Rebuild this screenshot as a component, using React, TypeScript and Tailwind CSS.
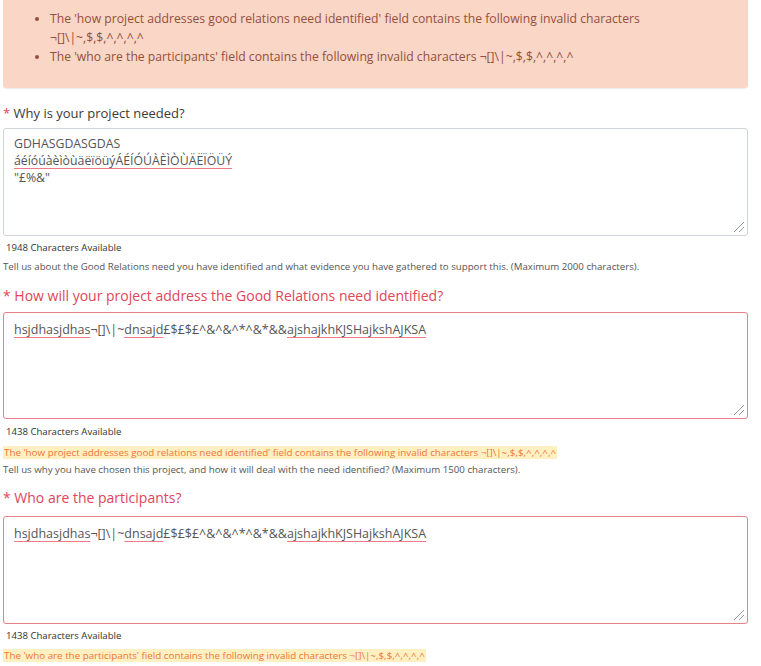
import React from "react";

const font = { fontFamily: '"Open Sans", "Noto Sans", Arial, sans-serif' };

function Resize() {
  return (
    <svg className="absolute right-[2px] bottom-[2px]" width="12" height="12" viewBox="0 0 12 12">
      <line x1="1" y1="11" x2="11" y2="1" stroke="#9a9a9a" strokeWidth="1" />
      <line x1="6" y1="11" x2="11" y2="6" stroke="#9a9a9a" strokeWidth="1" />
    </svg>
  );
}

function Sp({ children }: { children: React.ReactNode }) {
  return (
    <span className="underline decoration-[#ee7b85] decoration-1 underline-offset-[3px]">
      {children}
    </span>
  );
}

function BadText() {
  return (
    <>
      <Sp>hsjdhasjdhas</Sp>¬[]\|~<Sp>dnsajd</Sp>£$£$£^&amp;^&amp;^*^&amp;*&amp;&amp;<Sp>ajshajkhKJSHajkshAJKSA</Sp>
    </>
  );
}

export default function App() {
  return (
    <div className="w-[761px] h-[666px] bg-white overflow-hidden" style={font}>
      <div className="ml-[3px] w-[745px]">
        <div className="h-[88px] bg-[#f9d6c5] rounded-b-[4px] shadow-[0_1px_1px_rgba(0,0,0,0.08)] pt-[9px] text-[12.2px] leading-[19px] text-[#94503d]">
          <ul className="list-disc pl-[47px]">
            <li>
              The 'how project addresses good relations need identified' field contains the following invalid characters
              <br />¬[]\|~,$,$,^,^,^,^
            </li>
            <li>The 'who are the participants' field contains the following invalid characters ¬[]\|~,$,$,^,^,^,^</li>
          </ul>
        </div>

        <div className="mt-[15px] text-[13px] leading-[20px] text-[#3a3a3a]">
          <span className="text-[#e0455a]">*</span> Why is your project needed?
        </div>
        <div className="relative mt-[5px] h-[108px] border border-[#cfd4da] rounded-[3px] px-[10px] pt-[6px] text-[12.3px] leading-[17px] text-[#555]">
          <div>GDHASGDASGDAS</div>
          <div>
            <Sp>áéíóúàèìòùäëïöüýÁÉÍÓÚÀÈÌÒÙÄËÏÖÜÝ</Sp>
          </div>
          <div>"£%&amp;"</div>
          <Resize />
        </div>
        <div className="mt-[5px] pl-[3px] text-[9.6px] leading-[14px] text-[#333]">1948 Characters Available</div>
        <div className="mt-[5px] text-[9.7px] leading-[14px] text-[#555]">
          Tell us about the Good Relations need you have identified and what evidence you have gathered to support this. (Maximum 2000 characters).
        </div>

        <div className="mt-[12px] text-[14px] leading-[20px] text-[#e0455a]">* How will your project address the Good Relations need identified?</div>
        <div className="relative mt-[6px] h-[107px] border border-[#e8808a] rounded-[3px] px-[10px] pt-[8px] text-[12.5px] leading-[17px] text-[#555]">
          <BadText />
          <Resize />
        </div>
        <div className="mt-[6px] pl-[3px] text-[9.6px] leading-[14px] text-[#333]">1438 Characters Available</div>
        <div className="mt-[7px] flex">
          <span className="bg-[#fff0c2] text-[#f0743a] text-[9.8px] leading-[13px] px-[1px]">
            The 'how project addresses good relations need identified' field contains the following invalid characters ¬[]\|~,$,$,^,^,^,^
          </span>
        </div>
        <div className="mt-[4px] text-[9.7px] leading-[14px] text-[#555]">
          Tell us why you have chosen this project, and how it will deal with the need identified? (Maximum 1500 characters).
        </div>

        <div className="mt-[11px] text-[14px] leading-[20px] text-[#e0455a]">* Who are the participants?</div>
        <div className="relative mt-[8px] h-[108px] border border-[#e8808a] rounded-[3px] px-[10px] pt-[8px] text-[12.5px] leading-[17px] text-[#555]">
          <BadText />
          <Resize />
        </div>
        <div className="mt-[5px] pl-[3px] text-[9.6px] leading-[14px] text-[#333]">1438 Characters Available</div>
        <div className="mt-[6px] flex">
          <span className="bg-[#fff0c2] text-[#f0743a] text-[9.8px] leading-[13px] px-[1px]">
            The 'who are the participants' field contains the following invalid characters ¬[]\|~,$,$,^,^,^,^
          </span>
        </div>
      </div>
    </div>
  );
}
